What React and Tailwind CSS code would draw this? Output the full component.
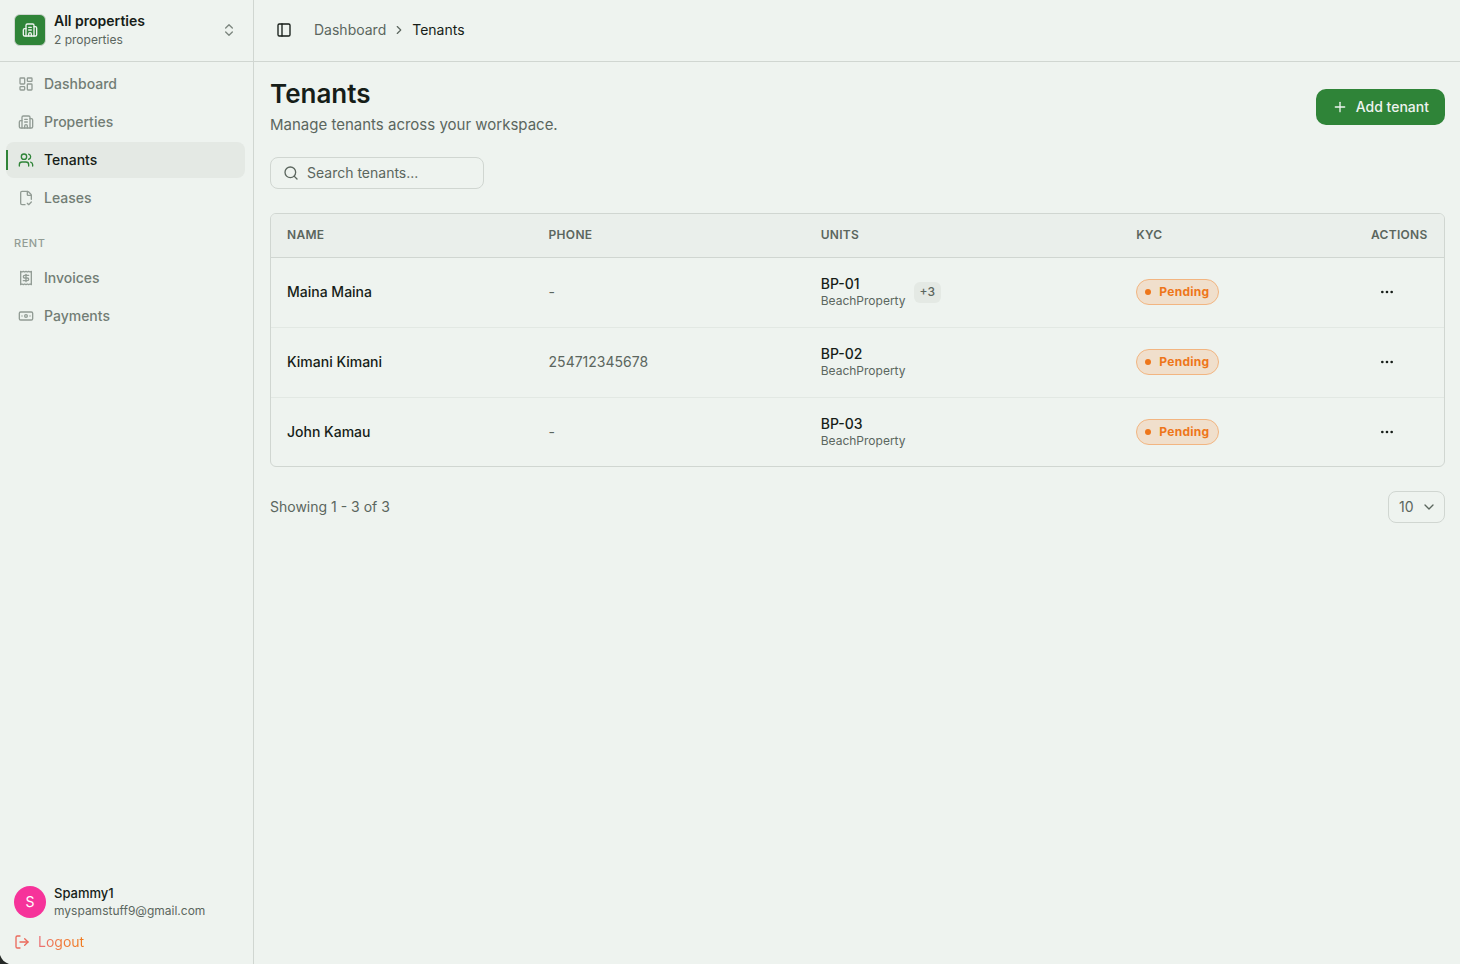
import { useState } from "react";
import {
  Banknote,
  Building2,
  ChevronDown,
  ChevronRight,
  ChevronsUpDown,
  Ellipsis,
  FileCheckCorner,
  LayoutDashboard,
  LogOut,
  PanelLeft,
  Plus,
  Receipt,
  Search,
  Users,
} from "lucide-react";

const MAIN_LINKS = [
  { label: "Dashboard", icon: LayoutDashboard },
  { label: "Properties", icon: Building2 },
  { label: "Tenants", icon: Users },
  { label: "Leases", icon: FileCheckCorner },
];

const RENT_LINKS = [
  { label: "Invoices", icon: Receipt },
  { label: "Payments", icon: Banknote },
];

const TENANTS = [
  { id: 1, name: "Maina Maina", phone: "-", unit: "BP-01", property: "BeachProperty", more: 3, kyc: "Pending" },
  { id: 2, name: "Kimani Kimani", phone: "254712345678", unit: "BP-02", property: "BeachProperty", more: 0, kyc: "Pending" },
  { id: 3, name: "John Kamau", phone: "-", unit: "BP-03", property: "BeachProperty", more: 0, kyc: "Pending" },
];

const NavItem = ({ label, icon: Icon, active }) => (
  <li className="relative">
    {active && (
      <span className="absolute left-0 top-2 h-5 w-[2px] bg-[#2f8438]"></span>
    )}
    <a
      href="#"
      aria-current={active ? "page" : undefined}
      className={`flex h-9 items-center gap-2.5 rounded-lg px-3 text-sm font-medium ${
        active ? "bg-[#e4e9e4] text-[#161d18]" : "text-[#727d75]"
      }`}
    >
      <Icon className={`size-4 ${active ? "text-[#2f8438]" : "text-[#929c95]"}`} />
      {label}
    </a>
  </li>
);

const Sidebar = ({ activeMenu }) => (
  <aside className="relative flex w-[254px] shrink-0 flex-col border-r border-[#d0d6d1]">
    <button className="flex h-[62px] items-center gap-2 border-b border-[#d0d6d1] px-3.5 pb-0.5 text-left">
      <span className="flex size-8 items-center justify-center rounded-md border border-[#d0d6d1] bg-[#2f8438]">
        <Building2 className="size-4 text-[#eef3ef]" />
      </span>
      <span className="flex flex-1 flex-col">
        <span className="text-sm leading-5 font-semibold text-[#161d18]">All properties</span>
        <span className="text-xs leading-[18px] text-[#5b665e]">2 properties</span>
      </span>
      <ChevronsUpDown className="mr-0.5 size-4 text-[#7c867f]" />
    </button>

    <nav className="flex-1 pt-1 pr-2 pl-1.5">
      <ul className="flex flex-col gap-0.5">
        {MAIN_LINKS.map((link) => (
          <NavItem key={link.label} {...link} active={link.label === activeMenu} />
        ))}
      </ul>
      <h2 className="mt-5 mb-2.5 px-2 text-[11px] leading-[14px] font-medium tracking-wider text-[#929c95]">
        RENT
      </h2>
      <ul className="flex flex-col gap-0.5">
        {RENT_LINKS.map((link) => (
          <NavItem key={link.label} {...link} />
        ))}
      </ul>
    </nav>

    <div className="px-3.5 pb-3">
      <div className="flex items-center gap-2">
        <span className="flex size-8 items-center justify-center rounded-full bg-[#f6339a] text-sm text-white">
          S
        </span>
        <div>
          <p className="text-[13px] leading-[18px] font-medium text-[#161d18]">Spammy1</p>
          <p className="text-xs leading-[18px] text-[#5b665e]">myspamstuff9@gmail.com</p>
        </div>
      </div>
      <button className="mt-3 flex items-center gap-2 text-sm">
        <LogOut className="size-4 text-[#ea6a5c]" />
        <span className="bg-linear-to-r from-[#ea7078] via-[#f07a3c] to-[#f07a1c] bg-clip-text text-transparent">
          Logout
        </span>
      </button>
    </div>

    {/* rounded window corner */}
    <svg className="absolute bottom-0 left-0 size-3" viewBox="0 0 12 12" fill="#252826">
      <path d="M0 3C1.500 7.500 4.500 10.500 9 12H0Z" />
    </svg>
  </aside>
);

const KycBadge = ({ status }) => (
  <span className="inline-flex h-[26px] items-center gap-2 rounded-full border border-[#f2b581] bg-[#f0dfcc] px-2 text-xs font-bold tracking-wide text-[#ee761a]">
    <span className="size-1.5 rounded-full bg-[#ee761a]"></span>
    {status}
  </span>
);

const TenantsTable = ({ tenants }) => (
  <div className="mt-6 overflow-hidden rounded-md border border-[#d0d6d1]">
    <table className="w-full table-fixed text-left text-sm">
      <thead>
        <tr className="h-[43px] border-b border-[#d0d6d1] bg-[#eaefeb] text-xs tracking-wide text-[#5b665e]">
          <th className="w-[22.3%] px-4 font-semibold">NAME</th>
          <th className="w-[23.2%] px-4 font-semibold">PHONE</th>
          <th className="w-[26.9%] px-4 font-semibold">UNITS</th>
          <th className="px-4 font-semibold">KYC</th>
          <th className="w-[89px] px-4 font-semibold">ACTIONS</th>
        </tr>
      </thead>
      <tbody>
        {tenants.map((tenant) => (
          <tr key={tenant.id} className="h-[70px] border-b border-[#e2e8e3] last:h-[69px] last:border-b-0">
            <td className="px-4 font-medium text-[#161d18]">{tenant.name}</td>
            <td className="px-4 text-[#5b665e]">{tenant.phone}</td>
            <td className="px-4">
              <div className="flex items-center gap-2">
                <div>
                  <p className="leading-[18px] font-medium text-[#161d18]">{tenant.unit}</p>
                  <p className="text-xs leading-4 text-[#5b665e]">{tenant.property}</p>
                </div>
                {tenant.more > 0 && (
                  <span className="flex h-[21px] items-center rounded-md bg-[#e4e9e4] px-1.5 text-xs font-medium text-[#5b665e]">
                    +{tenant.more}
                  </span>
                )}
              </div>
            </td>
            <td className="px-4">
              <KycBadge status={tenant.kyc} />
            </td>
            <td className="px-4">
              <button
                aria-label={`Actions for ${tenant.name}`}
                className="flex size-8 items-center justify-center text-[#161d18]"
              >
                <Ellipsis className="size-4" />
              </button>
            </td>
          </tr>
        ))}
      </tbody>
    </table>
  </div>
);

const App = () => {
  const [search, setSearch] = useState("");
  const [pageSize, setPageSize] = useState("10");

  const tenants = TENANTS.filter((t) =>
    t.name.toLowerCase().includes(search.toLowerCase())
  );

  return (
    <div className="flex min-h-screen bg-[#eef3ef] font-['Inter',sans-serif] text-[#161d18]">
      <Sidebar activeMenu="Tenants" />

      <div className="min-w-0 flex-1">
        <header className="flex h-[62px] items-center gap-4 border-b border-[#d0d6d1] px-4 pb-0.5">
          <button aria-label="Toggle sidebar" className="flex size-7 items-center justify-center">
            <PanelLeft className="size-4" />
          </button>
          <nav aria-label="Breadcrumb" className="flex items-center gap-1.5 text-sm">
            <a href="#" className="text-[#5b665e]">Dashboard</a>
            <ChevronRight className="size-3.5 text-[#5b665e]" />
            <span>Tenants</span>
          </nav>
        </header>

        <main className="pt-4 pr-[15px] pl-4">
          <div className="flex items-center justify-between">
            <div>
              <h1 className="text-[26px] leading-8 font-semibold">Tenants</h1>
              <p className="mt-1 text-[15px] leading-[22px] text-[#5b665e]">
                Manage tenants across your workspace.
              </p>
            </div>
            <button className="flex h-9 items-center gap-2 rounded-[10px] bg-[#2f8438] px-4 text-sm font-medium text-[#eef3ef]">
              <Plus className="size-4" />
              Add tenant
            </button>
          </div>

          <label className="mt-[21px] flex h-8 w-[214px] items-center gap-2 rounded-lg border border-[#d0d6d1] px-3">
            <Search className="size-4 shrink-0 text-[#5b665e]" />
            <input
              type="text"
              aria-label="Search tenants"
              placeholder="Search tenants..."
              className="w-full min-w-0 bg-transparent text-sm outline-none placeholder:text-[#5b665e]"
              value={search}
              onChange={(e) => setSearch(e.target.value)}
            />
          </label>

          <TenantsTable tenants={tenants} />

          <div className="mt-6 flex items-center justify-between text-sm text-[#5b665e]">
            <p>
              Showing 1 - {tenants.length} of {tenants.length}
            </p>
            <div className="relative">
              <select
                aria-label="Rows per page"
                className="h-8 appearance-none rounded-lg border border-[#d0d6d1] bg-transparent pr-[27px] pl-2.5"
                value={pageSize}
                onChange={(e) => setPageSize(e.target.value)}
              >
                <option>10</option>
                <option>20</option>
                <option>50</option>
              </select>
              <ChevronDown className="pointer-events-none absolute top-2 right-2 size-4" />
            </div>
          </div>
        </main>
      </div>
    </div>
  );
};

export default App;
